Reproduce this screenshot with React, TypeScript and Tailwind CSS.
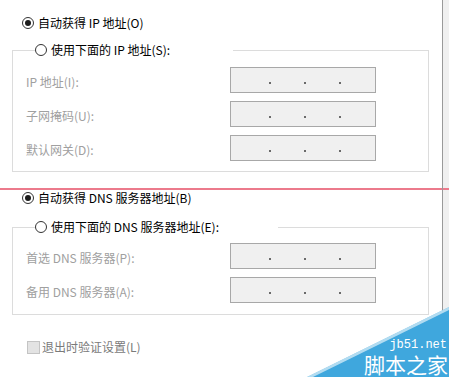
import React from "react";

const font = { fontFamily: '"Noto Sans CJK SC", "Noto Sans", sans-serif' };

function Radio({ checked }: { checked?: boolean }) {
    return (
        <span className="w-[12px] h-[12px] rounded-full border border-[#333333] bg-white flex items-center justify-center shrink-0">
            {checked && <span className="w-[6px] h-[6px] rounded-full bg-[#1b1b1b]" />}
        </span>
    );
}

function IpBox() {
    return (
        <div className="w-[146px] h-[26px] border border-[#a8a8a8] bg-[#f0f0f0] flex items-start pt-[14px] pl-[38px] gap-[33px]">
            <span className="w-[2px] h-[2px] bg-[#6a6a6a]" />
            <span className="w-[2px] h-[2px] bg-[#6a6a6a]" />
            <span className="w-[2px] h-[2px] bg-[#6a6a6a]" />
        </div>
    );
}

function Field({ label }: { label: string }) {
    return (
        <div className="flex items-center h-[26px]">
            <span className="w-[204px] text-[#a0a0a0] leading-[16px] pt-[3px]">{label}</span>
            <IpBox />
        </div>
    );
}

function Group({ title, legendWidth, fields, top, bottom }: { title: string; legendWidth: string; fields: string[]; top: string; bottom: string }) {
    return (
        <fieldset className={`ml-[12px] w-[417px] border border-[#dcdcdc] pl-[13px] ${bottom}`}>
            <legend className={`ml-[9px] h-[16px] ${legendWidth}`}>
                <div className="flex items-center gap-[4px] h-[16px]">
                    <Radio />
                    <span className="text-black leading-[16px]">{title}</span>
                </div>
            </legend>
            <div className={`flex flex-col gap-[8px] ${top}`}>
                {fields.map((f) => (
                    <Field key={f} label={f} />
                ))}
            </div>
        </fieldset>
    );
}

export default function App() {
    return (
        <div className="w-[449px] h-[377px] bg-white flex relative overflow-hidden text-[12px]" style={font}>
            <div className="w-[442px] flex flex-col">
                <div className="mt-[15px] ml-[22px] h-[16px] flex items-center gap-[4px]">
                    <Radio checked />
                    <span className="text-black leading-[16px]">自动获得 IP 地址(O)</span>
                </div>
                <div className="mt-[11px]">
                    <Group
                        title="使用下面的 IP 地址(S):"
                        legendWidth="w-[198px]"
                        fields={["IP 地址(I):", "子网掩码(U):", "默认网关(D):"]}
                        top="mt-[9px]"
                        bottom="pb-[10px]"
                    />
                </div>
                <div className="mt-[16px] h-[2px] bg-[#ec7a8c]" />
                <div className="ml-[22px] h-[16px] flex items-center gap-[4px]">
                    <Radio checked />
                    <span className="text-black leading-[16px]">自动获得 DNS 服务器地址(B)</span>
                </div>
                <div className="mt-[13px]">
                    <Group
                        title="使用下面的 DNS 服务器地址(E):"
                        legendWidth="w-[243px]"
                        fields={["首选 DNS 服务器(P):", "备用 DNS 服务器(A):"]}
                        top="mt-[8px]"
                        bottom="pb-[11px]"
                    />
                </div>
                <div className="mt-[24px] ml-[27px] h-[16px] flex items-center gap-[2px]">
                    <span className="w-[13px] h-[13px] border border-[#c4c4c4] bg-[#e3e3e3] shrink-0" />
                    <span className="text-[#7a7a7a] leading-[16px]">退出时验证设置(L)</span>
                </div>
            </div>
            <div className="w-px bg-[#9a9a9a]" />
            <div className="flex-1 bg-[#f0f0f0] flex flex-col">
                <div className="h-[188px]" />
                <div className="h-[2px] bg-[#ec7a8c]" />
            </div>

            {/* watermark */}
            <div className="absolute right-0 bottom-0 w-[142px] h-[70px]">
                <svg width="142" height="70" viewBox="0 0 142 70" className="absolute inset-0">
                    <polygon points="0,70 142,0 142,70" fill="#3fa7dd" />
                    <polygon points="0,70 142,0 142,3 6,70" fill="#ffffff" opacity="0.6" />
                </svg>
                <div className="absolute right-[2px] top-[32px] text-white text-[12px] leading-[13px]" style={{ fontFamily: '"Liberation Mono", monospace' }}>
                    jb51.net
                </div>
                <div className="absolute right-[1px] top-[47px] text-white text-[21px] leading-[21px] whitespace-nowrap" style={font}>
                    脚本之家
                </div>
            </div>
        </div>
    );
}
